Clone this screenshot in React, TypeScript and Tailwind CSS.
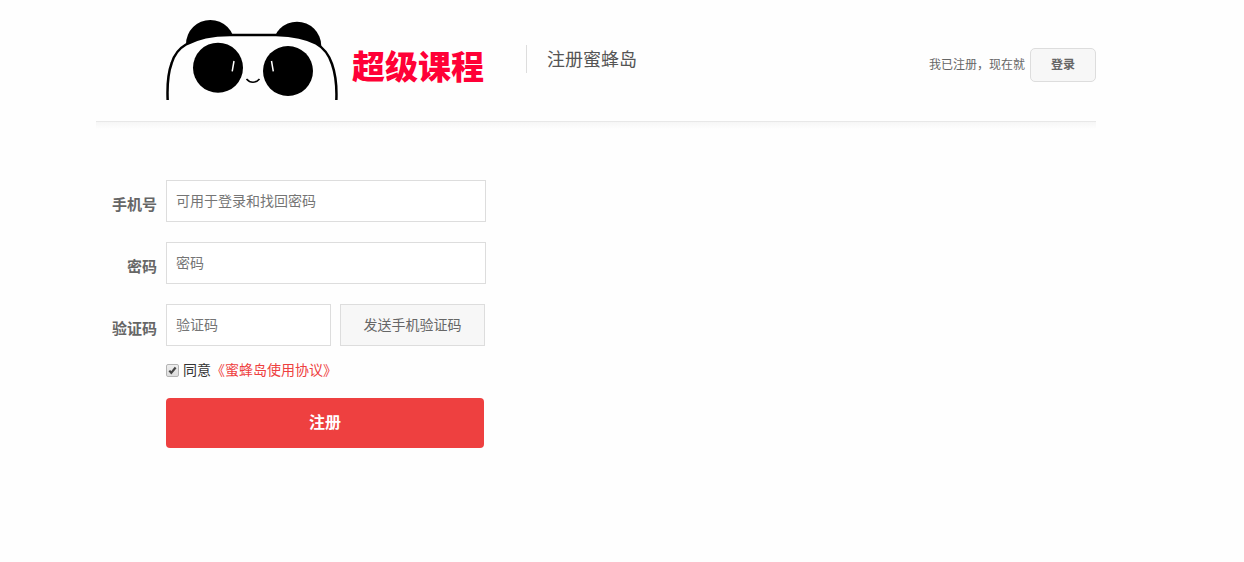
import { useState } from "react";
import type { InputHTMLAttributes, ReactNode } from "react";

const PandaLogo = () => (
  <svg width="172" height="80" viewBox="0 0 172 80" aria-hidden="true" className="shrink-0">
    <circle cx="44.3" cy="24.3" r="24.3" fill="#000" />
    <circle cx="131" cy="26" r="24.3" fill="#000" />
    <path
      d="M1.7 81C1 66 2 53 5.7 43C8.500 34 13 28.500 20 24.500C30 19 44 15 64 15H110C126 15.500 140 18 150 23.500C158 28 163 35 166 44C169.500 54 171 66 170.300 81"
      fill="#fefefe"
      stroke="#000"
      strokeWidth="2.5"
    />
    <circle cx="52" cy="47.700" r="25" fill="#000" />
    <circle cx="122" cy="51" r="25" fill="#000" />
    <path d="M68 41L66.200 51.300M105.500 41L107.300 51.300" stroke="#fff" strokeWidth="1.500" />
    <path d="M80.500 59C84 63.300 90 63.300 93.500 59" fill="none" stroke="#000" strokeWidth="1.600" />
  </svg>
);

const Header = () => (
  <header>
    <div className="flex h-[121px] items-start justify-between">
      <div className="flex pt-5 pl-[70px]">
        <PandaLogo />
        <span className="ml-[14px] pt-6 text-[33px] leading-[48px] font-black text-[#ff0036]">
          超级课程
        </span>
        <h1 className="mt-[25px] ml-[42px] h-7 border-l border-[#ddd] pl-5 text-[18px] leading-[30px] text-[#555]">
          注册蜜蜂岛
        </h1>
      </div>
      <div className="flex items-center gap-[5px] pt-12 text-[12px] text-[#666]">
        <span className="leading-[34px]">我已注册，现在就</span>
        <button
          type="button"
          className="h-[34px] w-[66px] rounded-[5px] border border-[#ddd] bg-[#f7f7f7] font-bold"
        >
          登录
        </button>
      </div>
    </div>
    <div className="h-2 border-t border-[#e8e8e8] bg-linear-to-b from-[#f6f6f6] to-[#fefefe]" />
  </header>
);

const inputClass =
  "h-[42px] border border-[#ddd] bg-white px-[9px] text-[14px] text-[#666] outline-none placeholder:text-[#757575]";

type FieldProps = InputHTMLAttributes<HTMLInputElement> & {
  id: string;
  label: string;
  children?: ReactNode;
};

const Field = ({ id, label, children, className = "w-[320px]", ...rest }: FieldProps) => (
  <div className="flex">
    <label
      htmlFor={id}
      className="mr-[9px] w-[61px] pt-2 text-right text-[15px] leading-[34px] font-bold text-[#666]"
    >
      {label}
    </label>
    <input id={id} className={`${inputClass} ${className}`} {...rest} />
    {children}
  </div>
);

const RegisterForm = () => {
  const [agreed, setAgreed] = useState(true);

  return (
    <form className="mt-[51px]" onSubmit={(e) => e.preventDefault()}>
      <div className="flex flex-col gap-5">
        <Field id="phone" label="手机号" type="tel" placeholder="可用于登录和找回密码" />
        <Field id="password" label="密码" type="password" placeholder="密码" />
        <Field id="code" label="验证码" type="text" placeholder="验证码" className="w-[165px]">
          <button
            type="button"
            className="ml-[9px] h-[42px] w-[145px] border border-[#ddd] bg-[#f7f7f7] text-[14px] text-[#666]"
          >
            发送手机验证码
          </button>
        </Field>
      </div>

      <div className="mt-[14px] ml-[70px] flex h-5 items-center text-[14px] text-[#333]">
        <span className="relative mr-1 size-[13px]">
          <input
            id="agree"
            type="checkbox"
            checked={agreed}
            onChange={(e) => setAgreed(e.target.checked)}
            className="block size-[13px] appearance-none rounded-[2px] border border-[#b4b4b4] bg-linear-to-b from-[#eee] to-[#ddd]"
          />
          {agreed && (
            <svg viewBox="0 0 13 13" className="pointer-events-none absolute inset-0 size-[13px]">
              <path d="M3.300 6.600L5.300 8.900L9.600 3.500" fill="none" stroke="#444" strokeWidth="2.200" />
            </svg>
          )}
        </span>
        <label htmlFor="agree">同意</label>
        <a href="#agreement" className="text-[#ee4040]">
          《蜜蜂岛使用协议》
        </a>
      </div>

      <button
        type="submit"
        className="mt-[18px] ml-[70px] block h-[50px] w-[318px] rounded-[4px] bg-[#ee4040] text-[16px] font-bold text-white"
      >
        注册
      </button>
    </form>
  );
};

export default function App() {
  return (
    <div className="min-h-screen bg-[#fefefe] pr-[148px] pl-24 font-['Liberation_Sans','Noto_Sans_CJK_SC',sans-serif]">
      <Header />
      <main>
        <RegisterForm />
      </main>
    </div>
  );
}
